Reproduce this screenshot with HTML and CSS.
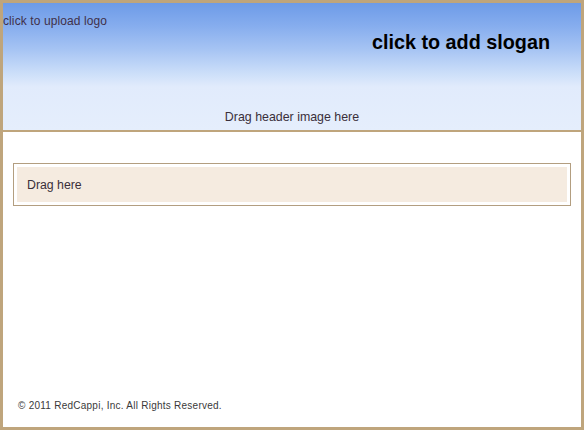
FILE: index.html
```html
<!DOCTYPE html>
<html>
<head>
<meta charset="utf-8">
<link rel="stylesheet" href="styles.css">
</head>
<body>
<div class="frame">
  <div class="header">
    <div class="header-top">
      <div class="logo">click to upload logo</div>
      <div class="slogan">click to add slogan</div>
    </div>
    <div class="header-drop">Drag header image here</div>
  </div>
  <div class="content">
    <div class="dropbox">
      <div class="dropbox-inner">Drag here</div>
    </div>
  </div>
  <div class="footer">© 2011 RedCappi, Inc. All Rights Reserved.</div>
</div>
</body>
</html>
```
FILE: styles.css
```css
html, body {
  margin: 0;
  padding: 0;
  background: #ffffff;
}
.frame {
  box-sizing: border-box;
  width: 584px;
  height: 430px;
  border: 3px solid #bfa57c;
  display: flex;
  flex-direction: column;
  font-family: "Liberation Sans", Arial, sans-serif;
  color: #3a2f3a;
}
.header {
  height: 127px;
  border-bottom: 2px solid #bfa57c;
  background: linear-gradient(to bottom, #6d9be8 0%, #86adee 18%, #a5c3f3 36%, #cbdef9 55%, #e1ebfc 66%, #e5eefc 100%);
  display: flex;
  flex-direction: column;
}
.header-top {
  display: flex;
  justify-content: space-between;
  align-items: flex-start;
}
.logo {
  font-size: 12px;
  letter-spacing: 0.1px;
  line-height: 14px;
  margin-top: 11px;
  color: #40304a;
}
.slogan {
  font-size: 19.8px;
  font-weight: bold;
  color: #000000;
  margin-top: 27px;
  margin-right: 31px;
  line-height: 24px;
}
.header-drop {
  margin-top: auto;
  margin-bottom: 6px;
  text-align: center;
  font-size: 12.4px;
  line-height: 14px;
  color: #3a2f3a;
}
.content {
  flex: 1;
  padding: 31px 10px 0 10px;
}
.dropbox {
  border: 1px solid #b39e80;
  padding: 3px;
}
.dropbox-inner {
  background: #f5ebe0;
  height: 35px;
  padding-left: 10px;
  display: flex;
  align-items: center;
  font-size: 12.3px;
  color: #3a2f3a;
}
.footer {
  font-size: 10px;
  letter-spacing: 0.25px;
  padding: 0 0 15px 15px;
  line-height: 12px;
  color: #3a3a3a;
}
```
